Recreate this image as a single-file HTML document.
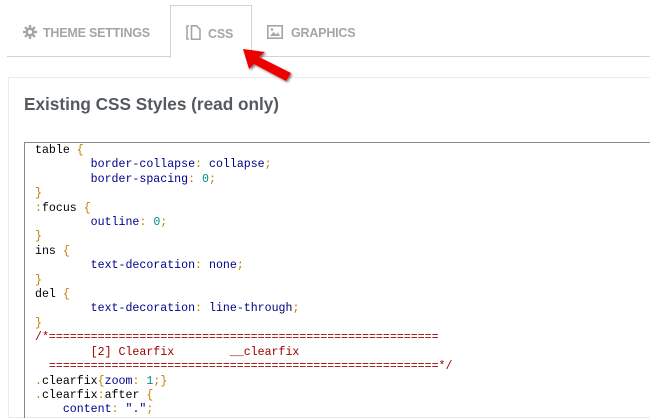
<!DOCTYPE html>
<html><head><style>
body{margin:0;width:650px;height:413px;overflow:hidden;background:#fff;font-family:"Liberation Sans",sans-serif;position:relative}
.tabline{position:absolute;left:7px;right:0;top:56px;border-top:1px solid #ccd3da}
.tab{position:absolute;top:25px;font-size:12.5px;font-weight:bold;color:#a2a6aa;letter-spacing:-0.2px}
.active{position:absolute;left:170px;top:5px;width:80px;height:52px;border:1px solid #ccd3da;border-bottom:none;background:#fff}
.panel{position:absolute;left:8px;top:77px;right:-5px;bottom:-5px;border:1px solid #ebebeb}
h1{position:absolute;left:24px;top:94px;margin:0;font-size:17.2px;color:#555a5f;font-weight:bold}
.code{position:absolute;left:24px;top:142px;right:-5px;bottom:-5px;border-top:1px solid #888;border-left:1px solid #888;}
pre{margin:0;position:absolute;left:10px;top:1px;font-family:"Liberation Mono",monospace;font-size:11.6px;line-height:14.4px;color:#000}
.p{color:#00008b}.v{color:#000080}.n{color:#008b8b}.b{color:#c08000}.c{color:#a00000}
</style></head><body>
<div class="tabline"></div>
<div class="active"></div>
<div class="tab" style="left:23px"><svg width="14" height="14" viewBox="0 0 14 14" style="vertical-align:-2px;margin-right:6px"><g fill="#a2a6aa"><circle cx="7" cy="7" r="4.5"/><rect x="5.8" y="0" width="2.4" height="14"/><rect x="0" y="5.8" width="14" height="2.4"/><rect x="5.8" y="0" width="2.4" height="14" transform="rotate(45 7 7)"/><rect x="5.8" y="0" width="2.4" height="14" transform="rotate(-45 7 7)"/></g><circle cx="7" cy="7" r="2" fill="#fff"/></svg>THEME SETTINGS</div>
<div class="tab" style="left:186px"><svg width="16" height="15" viewBox="0 0 16 15" style="vertical-align:-2px;margin-right:6px"><path d="M3 1H1v13h2" fill="none" stroke="#a2a6aa" stroke-width="1.6"/><path d="M5.5 0.8h5l3.5 3.5v10h-8.5z" fill="none" stroke="#a2a6aa" stroke-width="1.6"/></svg>CSS</div>
<div class="tab" style="left:267px"><svg width="16" height="14" viewBox="0 0 16 14" style="vertical-align:-2px;margin-right:8px"><rect x="0.8" y="0.8" width="14.4" height="12.4" fill="none" stroke="#a2a6aa" stroke-width="1.6"/><path d="M3 11l3.5-4 2.5 2.5 2-2 2 3.5z" fill="#a2a6aa"/><circle cx="5" cy="4.5" r="1.3" fill="#a2a6aa"/></svg>GRAPHICS</div>
<div class="panel"></div>
<h1>Existing CSS Styles (read only)</h1>
<div class="code"><pre>table <span class="b">{</span>
        <span class="p">border-collapse</span><span class="b">:</span> <span class="v">collapse</span><span class="b">;</span>
        <span class="p">border-spacing</span><span class="b">:</span> <span class="n">0</span><span class="b">;</span>
<span class="b">}</span>
<span class="b">:</span>focus <span class="b">{</span>
        <span class="p">outline</span><span class="b">:</span> <span class="n">0</span><span class="b">;</span>
<span class="b">}</span>
ins <span class="b">{</span>
        <span class="p">text-decoration</span><span class="b">:</span> <span class="v">none</span><span class="b">;</span>
<span class="b">}</span>
del <span class="b">{</span>
        <span class="p">text-decoration</span><span class="b">:</span> <span class="v">line-through</span><span class="b">;</span>
<span class="b">}</span>
<span class="c">/*========================================================
        [2] Clearfix        __clearfix
  ========================================================*/</span>
<span class="b">.</span>clearfix<span class="b">{</span><span class="p">zoom</span><span class="b">:</span> <span class="n">1</span><span class="b">;}</span>
<span class="b">.</span>clearfix<span class="b">:</span>after <span class="b">{</span>
    <span class="p">content</span><span class="b">:</span> <span class="v">"."</span><span class="b">;</span></pre></div>
<svg style="position:absolute;left:0;top:0" width="650" height="413">
<defs><filter id="s"><feDropShadow dx="1.5" dy="1.5" stdDeviation="1" flood-color="#000" flood-opacity="0.5"/></filter></defs>
<g filter="url(#s)" fill="#ee0000">
<path d="M243 49 L265 52 L259 57 L291 73 L286 81 L254 64 L249 69 Z"/>
</g>
</svg>
</body></html>
